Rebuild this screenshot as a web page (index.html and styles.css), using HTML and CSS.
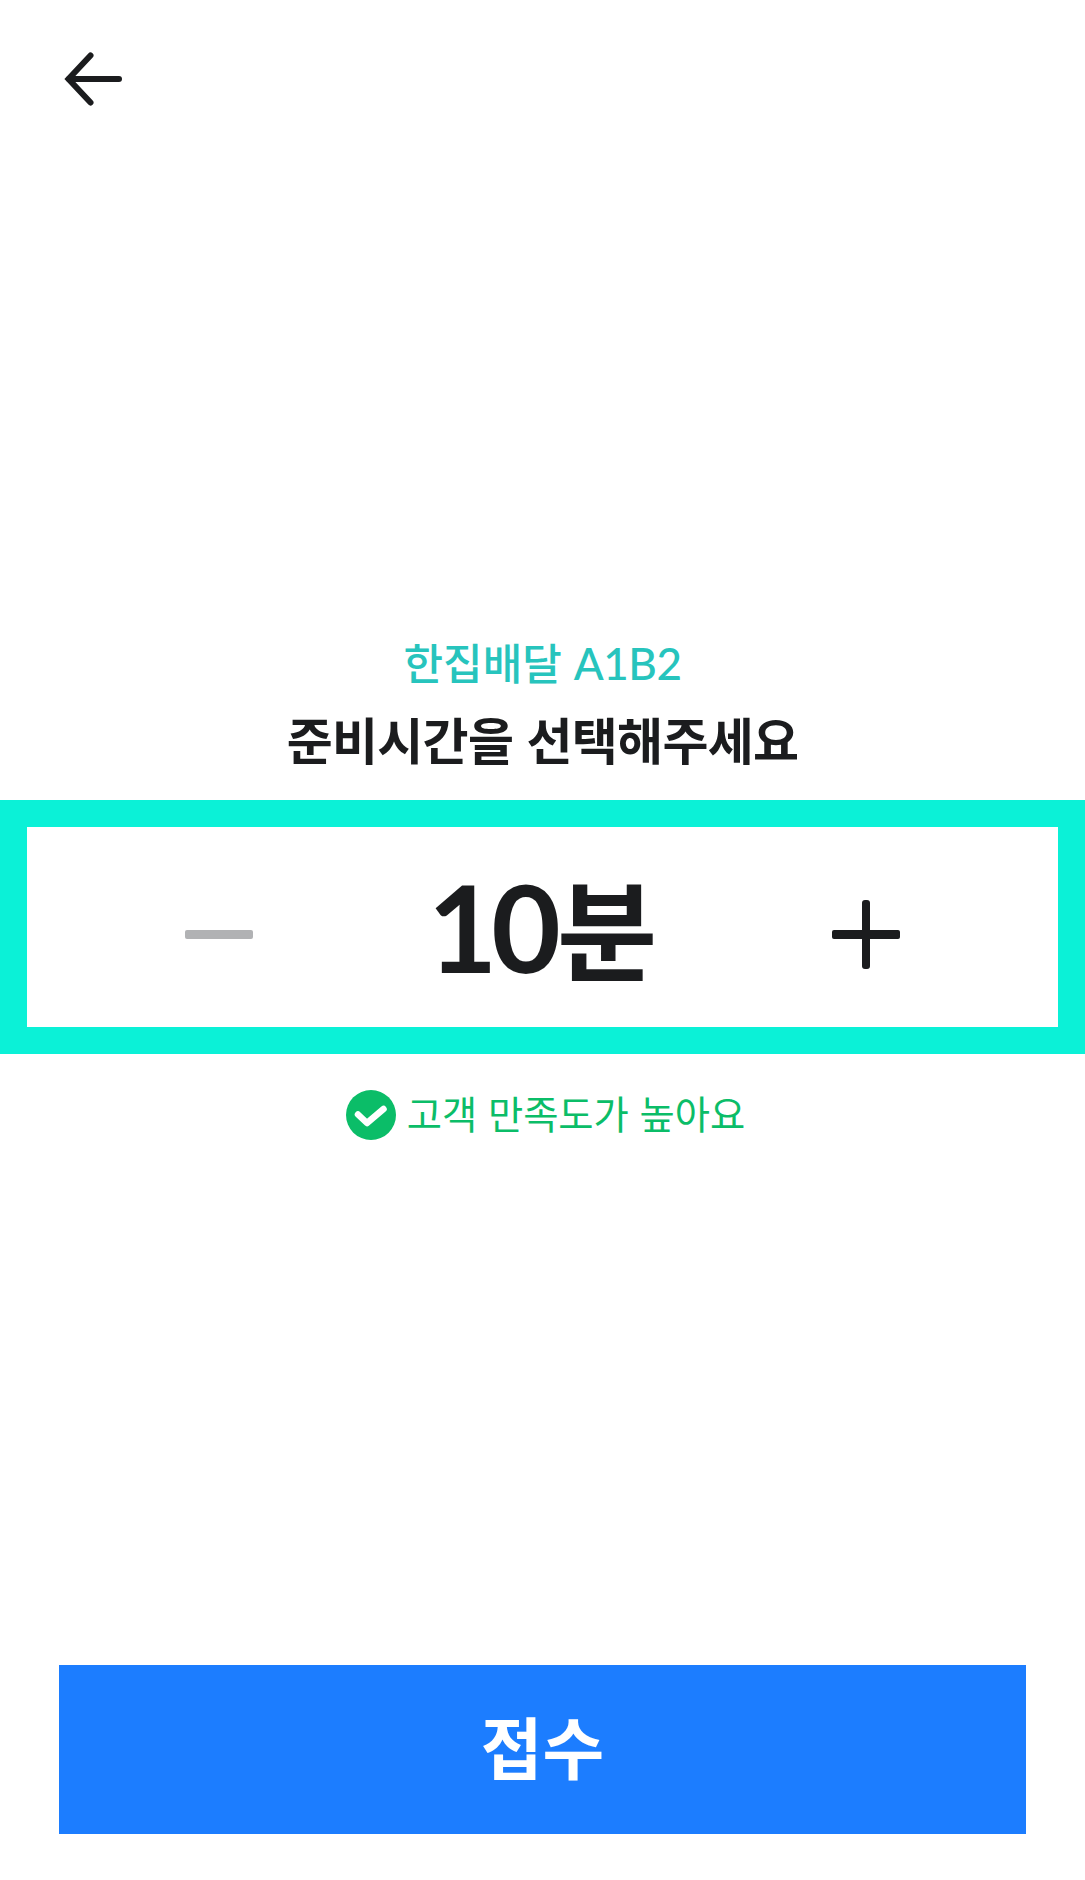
FILE: index.html
```html
<!DOCTYPE html>
<html lang="ko">
<head>
    <meta charset="UTF-8">
    <meta name="viewport" content="width=device-width, initial-scale=1.0">
    <title>준비시간 선택</title>
    <link rel="stylesheet" href="styles.css">
</head>
<body>
<div class="page">
    <header class="topBar">
        <svg class="backIcon" width="62" height="62" viewBox="0 0 62 62" fill="none" stroke="#1b1c1e" stroke-width="6" stroke-linecap="round" stroke-linejoin="miter">
            <path d="M58 30H8"/>
            <path d="M29.500 6.500L7.500 30L29.500 53.500"/>
        </svg>
    </header>

    <div class="titles">
        <div class="orderName">한집배달 <span class="orderCode">A1B2</span></div>
        <h1 class="mainTitle">준비시간을 선택해주세요</h1>
    </div>

    <div class="stepper">
        <span class="minus"></span>
        <span class="value"><span class="digits">10</span>분</span>
        <span class="plus"></span>
    </div>

    <div class="hint">
        <svg class="checkIcon" width="50" height="50" viewBox="0 0 50 50">
            <circle cx="25" cy="25" r="25" fill="#0bbd68"/>
            <path d="M12 24.500L21 33L37.500 19" fill="none" stroke="#fff" stroke-width="6.500" stroke-linecap="round" stroke-linejoin="round"/>
        </svg>
        <span class="hintText">고객 만족도가 높아요</span>
    </div>

    <button class="submit" type="button">접수</button>
</div>
</body>
</html>
```

FILE: styles.css
```css
html, body {
    margin: 0;
    background: #fff;
}

body {
    font-family: "Noto Sans CJK KR", "Noto Sans", sans-serif;
    color: #1b1c1e;
}

.page {
    height: 1880px;
    display: flex;
    flex-direction: column;
    align-items: center;
    overflow: hidden;
}

.topBar {
    align-self: stretch;
    height: 637px;
    padding: 49px 0 0 61px;
    box-sizing: border-box;
}

.backIcon {
    display: block;
}

.titles {
    text-align: center;
    height: 163px;
}

.orderName {
    font-size: 43px;
    line-height: 48px;
    font-weight: 500;
    color: #27c4bd;
}

.orderCode {
    font-family: Lato, "Noto Sans", sans-serif;
    font-size: 44px;
    font-weight: 500;
    letter-spacing: -0.5px;
}

.mainTitle {
    margin: 21px 0 0;
    font-size: 50px;
    line-height: 60px;
    font-weight: 700;
    letter-spacing: -0.7px;
}

.stepper {
    align-self: stretch;
    height: 254px;
    box-sizing: border-box;
    border: 27px solid #0bf1d7;
    display: flex;
    align-items: center;
    justify-content: center;
    position: relative;
}

.value {
    font-size: 109px;
    line-height: 120px;
    font-weight: 700;
    padding-bottom: 2px;
}

.digits {
    font-family: Lato, "Noto Sans", sans-serif;
    font-size: 120px;
    font-weight: 700;
    letter-spacing: -6px;
    margin-right: 2px;
}

.minus, .plus {
    position: absolute;
    width: 68px;
    height: 9px;
    top: 103px;
    border-radius: 2px;
}

.minus {
    left: 158px;
    background: #b1b2b4;
}

.plus {
    left: 805px;
    background: #1b1c1e;
}

.plus::after {
    content: "";
    position: absolute;
    left: 30px;
    top: -30px;
    width: 8px;
    height: 69px;
    border-radius: 3px;
    background: #1b1c1e;
}

.hint {
    margin-top: 34px;
    margin-left: 6px;
    display: flex;
    align-items: center;
    gap: 11px;
    font-size: 38.300px;
    line-height: 50px;
    color: #0bbd68;
}

.hintText {
    padding-bottom: 4px;
}

.checkIcon {
    display: block;
}

.submit {
    margin-top: auto;
    margin-bottom: 46px;
    width: 967px;
    height: 169px;
    border: 0;
    padding: 0 0 11px;
    background: #1c7dff;
    color: #fff;
    font-family: inherit;
    font-size: 67px;
    font-weight: 700;
}
```
